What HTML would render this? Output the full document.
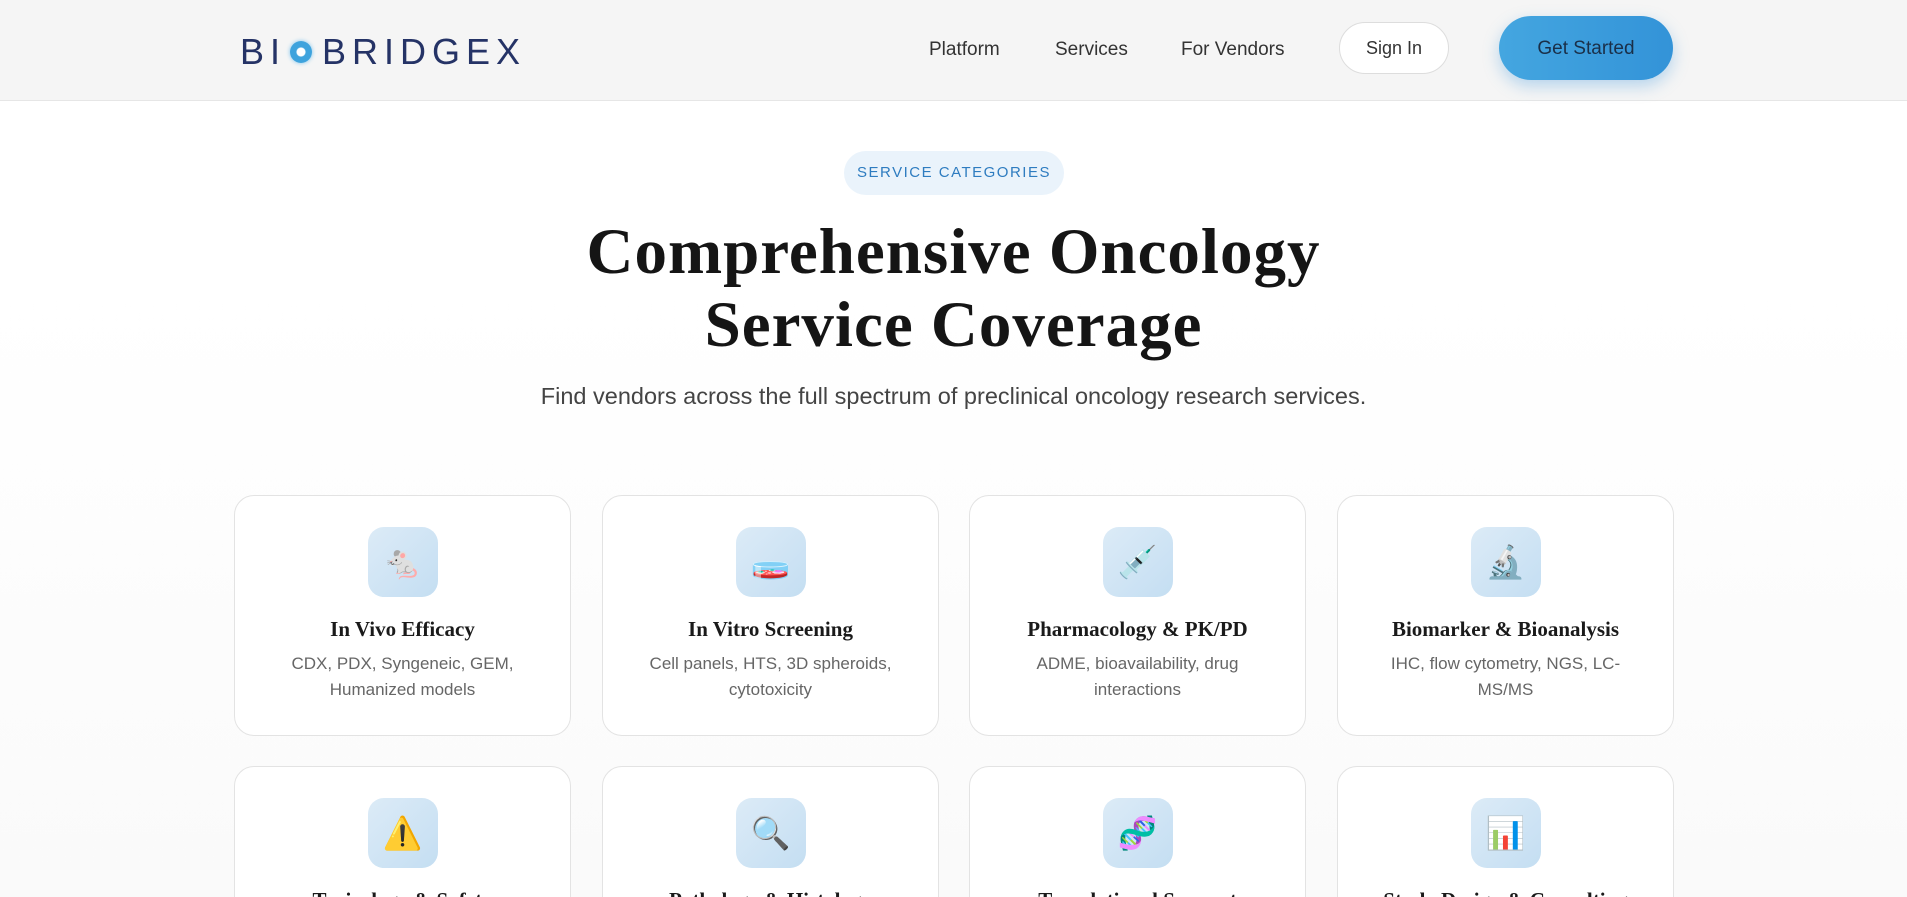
<!DOCTYPE html>
<html><head><meta charset="utf-8"><style>
*{margin:0;padding:0;box-sizing:border-box}
html,body{width:1907px;height:897px;overflow:hidden}
body{background:linear-gradient(#fff 300px,#fafafa 897px);font-family:"Liberation Sans","Noto Color Emoji",sans-serif;color:#222;position:relative}
.nav{height:101px;background:#f5f5f5;border-bottom:1px solid #e6e6e6;position:relative}
.logo{position:absolute;left:240px;top:31px;font-size:36px;letter-spacing:6px;color:#253366;font-weight:300;display:flex;align-items:center}
.dot{display:inline-block;width:22px;height:22px;border-radius:50%;background:radial-gradient(#fff 0 4px,#3ea3dd 5px);margin:0 10px 0 4px;box-shadow:0 0 4px #7cc3ee}
.nl{position:absolute;top:39px;font-size:19px;color:#333}
.signin{position:absolute;left:1339px;top:22px;width:110px;height:52px;border:1.5px solid #ddd;border-radius:26px;background:#fff;font-size:18px;text-align:center;line-height:50px;color:#333}
.gs{position:absolute;left:1499px;top:16px;width:174px;height:64px;border-radius:32px;background:linear-gradient(90deg,#44a6e0,#3393d8);color:#1a2f48;font-size:19px;text-align:center;line-height:66px;box-shadow:0 6px 16px rgba(60,150,220,.35)}
.badge{position:absolute;left:844px;top:151px;width:220px;height:44px;border-radius:22px;background:#eaf3fb;color:#2e7cc0;font-size:15px;letter-spacing:1.5px;text-align:center;line-height:44px}
h1{position:absolute;left:0;width:1907px;top:216px;text-align:center;font-family:"Liberation Serif",serif;font-weight:700;font-size:65px;line-height:73px;color:#151515;letter-spacing:1px}
.sub{position:absolute;width:1907px;top:383px;text-align:center;font-size:23.5px;color:#444}
.card{position:absolute;width:337px;height:241px;background:#fff;border:1px solid #e3e3e3;border-radius:20px;text-align:center}
.ic{width:70px;height:70px;border-radius:16px;background:linear-gradient(135deg,#dcebf7,#c4def2);margin:31px auto 0;font-size:32px;line-height:70px}
.t{font-family:"Liberation Serif",serif;font-weight:700;font-size:21px;margin-top:20px;color:#1a1a1a}
.d{font-size:17px;color:#666;line-height:26px;margin-top:9px;padding:0 40px}
</style></head><body>
<div class="nav">
<div class="logo">BI<span class="dot"></span>BRIDGEX</div>
<div class="nl" style="left:929px">Platform</div>
<div class="nl" style="left:1055px">Services</div>
<div class="nl" style="left:1181px">For Vendors</div>
<div class="signin">Sign In</div>
<div class="gs">Get Started</div>
</div>
<div class="badge">SERVICE CATEGORIES</div>
<h1>Comprehensive Oncology<br>Service Coverage</h1>
<div class="sub">Find vendors across the full spectrum of preclinical oncology research services.</div>
<div class="card" style="left:234px;top:495px"><div class="ic">🐁</div><div class="t">In Vivo Efficacy</div><div class="d">CDX, PDX, Syngeneic, GEM, Humanized models</div></div>
<div class="card" style="left:602px;top:495px"><div class="ic">🧫</div><div class="t">In Vitro Screening</div><div class="d">Cell panels, HTS, 3D spheroids, cytotoxicity</div></div>
<div class="card" style="left:969px;top:495px"><div class="ic">💉</div><div class="t">Pharmacology &amp; PK/PD</div><div class="d">ADME, bioavailability, drug interactions</div></div>
<div class="card" style="left:1337px;top:495px"><div class="ic">🔬</div><div class="t">Biomarker &amp; Bioanalysis</div><div class="d">IHC, flow cytometry, NGS, LC-MS/MS</div></div>
<div class="card" style="left:234px;top:766px"><div class="ic">⚠️</div><div class="t">Toxicology &amp; Safety</div></div>
<div class="card" style="left:602px;top:766px"><div class="ic">🔍</div><div class="t">Pathology &amp; Histology</div></div>
<div class="card" style="left:969px;top:766px"><div class="ic">🧬</div><div class="t">Translational Support</div></div>
<div class="card" style="left:1337px;top:766px"><div class="ic">📊</div><div class="t">Study Design &amp; Consulting</div></div>
</body></html>
